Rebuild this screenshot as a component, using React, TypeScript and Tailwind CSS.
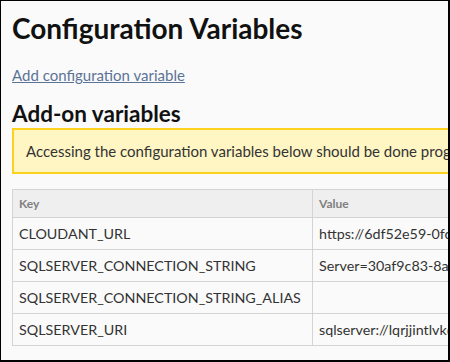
const rows = [
  { key: 'CLOUDANT_URL', value: 'https://6df52e59-0fc1-4b8f-a3b2-bluemix.cloudant.com' },
  { key: 'SQLSERVER_CONNECTION_STRING', value: 'Server=30af9c83-8ac1-4d2e-9f0a.database.windows.net' },
  { key: 'SQLSERVER_CONNECTION_STRING_ALIAS', value: '' },
  { key: 'SQLSERVER_URI', value: 'sqlserver://lqrjjintlvk@30af9c83.database.windows.net' },
];

const App = () => {
  return (
    <div
      className="w-[450px] h-[362px] overflow-hidden border-l border-t border-r-2 border-b-2 border-black bg-[#fafafa] text-[#333]"
      style={{ fontFamily: 'Lato, "Liberation Sans", sans-serif' }}
    >
      <div className="pl-[11px] w-[900px]">
        <h1 className="pt-[9px] text-[28px] leading-[36px] font-bold text-[#111]">Configuration Variables</h1>
        <a href="#" className="block mt-[20px] text-[15px] leading-[18px] text-[#5a7396] underline">
          Add configuration variable
        </a>
        <h2 className="mt-[17px] text-[22.5px] leading-[26px] font-bold text-[#111]">Add-on variables</h2>
        <div className="mt-[1px] h-[46px] flex items-center pl-[12px] bg-[#fff6c4] border-2 border-[#fcd21c] text-[15px] text-[#333]">
          Accessing the configuration variables below should be done programmatically via the environment.
        </div>
        <table className="mt-[15px] border-collapse text-[14.3px] text-[#333]">
          <thead>
            <tr className="h-[28px] bg-[#efefef]">
              <th className="w-[300px] border border-[#d4d4d4] px-[6px] text-left text-[12px] font-bold text-[#808080]">Key</th>
              <th className="w-[400px] border border-[#d4d4d4] px-[6px] text-left text-[12px] font-bold text-[#808080]">Value</th>
            </tr>
          </thead>
          <tbody>
            {rows.map((row) => (
              <tr key={row.key} className="h-[32px]">
                <td className="border border-[#d4d4d4] px-[6px] whitespace-nowrap">{row.key}</td>
                <td className="border border-[#d4d4d4] px-[6px] whitespace-nowrap">{row.value}</td>
              </tr>
            ))}
          </tbody>
        </table>
      </div>
    </div>
  );
};

export default App;
